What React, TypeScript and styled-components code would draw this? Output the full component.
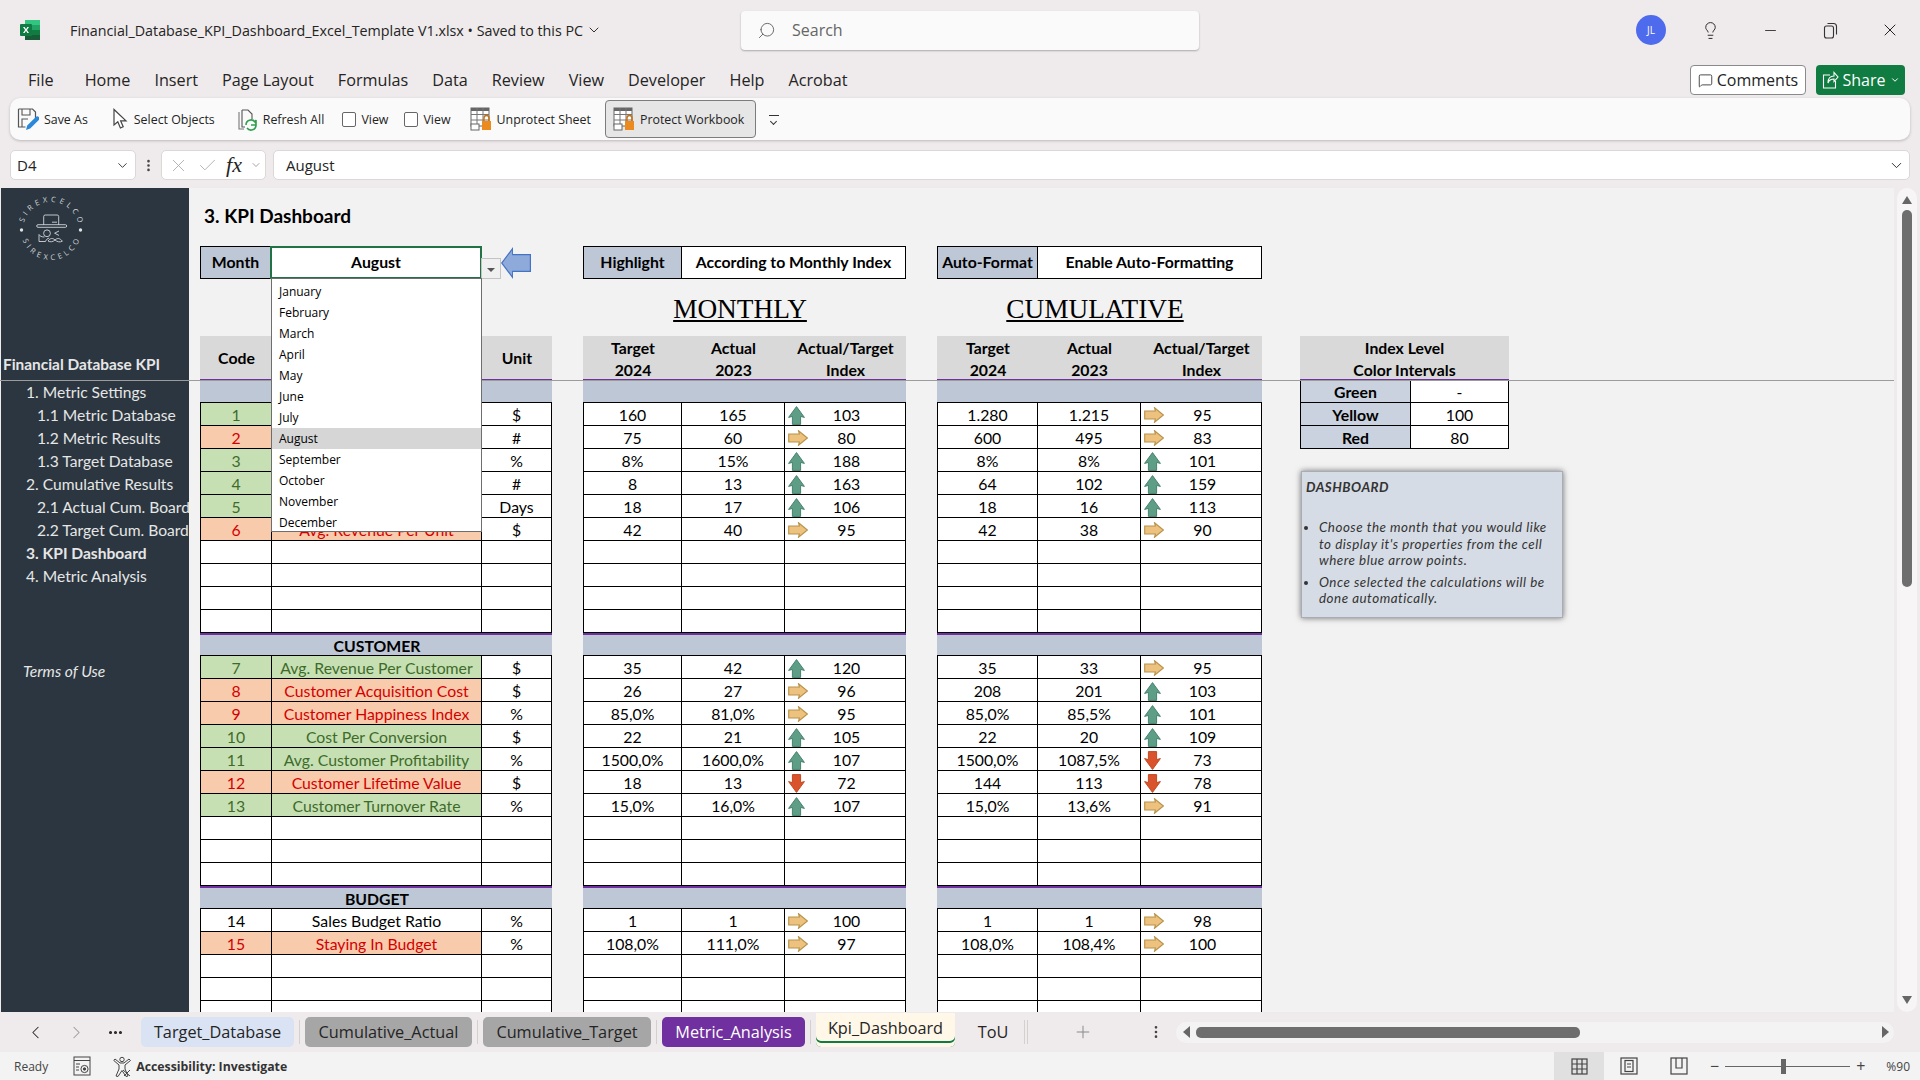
import React from "react";
import styled, { createGlobalStyle } from "styled-components";
import {
  Search,
  ChevronDown,
  Lightbulb,
  Minus,
  X,
  Check,
  MessageSquare,
  MoreVertical,
  ChevronLeft,
  ChevronRight,
  MoreHorizontal,
  Plus,
} from "lucide-react";

const GlobalStyle = createGlobalStyle`
  html, body {
    margin: 0;
    height: 100%;
    overflow: hidden;
    background: #efeaeb;
    font-family: "Open Sans", "Noto Sans", sans-serif;
    color: #242424;
  }
  * { box-sizing: border-box; }
`;

const CELL_FONT = `Lato, "Liberation Sans", sans-serif`;

type Tone = "green" | "red" | "none";
type Dir = "up" | "right" | "down";
type Row = {
  code: string;
  name: string;
  unit: string;
  tone: Tone;
  m: [string, string, Dir, string];
  c: [string, string, Dir, string];
};

const revenueRows: Row[] = [
  { code: "1", name: "", unit: "$", tone: "green", m: ["160", "165", "up", "103"], c: ["1.280", "1.215", "right", "95"] },
  { code: "2", name: "", unit: "#", tone: "red", m: ["75", "60", "right", "80"], c: ["600", "495", "right", "83"] },
  { code: "3", name: "", unit: "%", tone: "green", m: ["8%", "15%", "up", "188"], c: ["8%", "8%", "up", "101"] },
  { code: "4", name: "", unit: "#", tone: "green", m: ["8", "13", "up", "163"], c: ["64", "102", "up", "159"] },
  { code: "5", name: "", unit: "Days", tone: "green", m: ["18", "17", "up", "106"], c: ["18", "16", "up", "113"] },
  { code: "6", name: "Avg. Revenue Per Unit", unit: "$", tone: "red", m: ["42", "40", "right", "95"], c: ["42", "38", "right", "90"] },
];

const customerRows: Row[] = [
  { code: "7", name: "Avg. Revenue Per Customer", unit: "$", tone: "green", m: ["35", "42", "up", "120"], c: ["35", "33", "right", "95"] },
  { code: "8", name: "Customer Acquisition Cost", unit: "$", tone: "red", m: ["26", "27", "right", "96"], c: ["208", "201", "up", "103"] },
  { code: "9", name: "Customer Happiness Index", unit: "%", tone: "red", m: ["85,0%", "81,0%", "right", "95"], c: ["85,0%", "85,5%", "up", "101"] },
  { code: "10", name: "Cost Per Conversion", unit: "$", tone: "green", m: ["22", "21", "up", "105"], c: ["22", "20", "up", "109"] },
  { code: "11", name: "Avg. Customer Profitability", unit: "%", tone: "green", m: ["1500,0%", "1600,0%", "up", "107"], c: ["1500,0%", "1087,5%", "down", "73"] },
  { code: "12", name: "Customer Lifetime Value", unit: "$", tone: "red", m: ["18", "13", "down", "72"], c: ["144", "113", "down", "78"] },
  { code: "13", name: "Customer Turnover Rate", unit: "%", tone: "green", m: ["15,0%", "16,0%", "up", "107"], c: ["15,0%", "13,6%", "right", "91"] },
];

const budgetRows: Row[] = [
  { code: "14", name: "Sales Budget Ratio", unit: "%", tone: "none", m: ["1", "1", "right", "100"], c: ["1", "1", "right", "98"] },
  { code: "15", name: "Staying In Budget", unit: "%", tone: "red", m: ["108,0%", "111,0%", "right", "97"], c: ["108,0%", "108,4%", "right", "100"] },
];

const sections = [
  { title: "", rows: revenueRows, blanks: 4 },
  { title: "CUSTOMER", rows: customerRows, blanks: 3 },
  { title: "BUDGET", rows: budgetRows, blanks: 3 },
];

const months = ["January", "February", "March", "April", "May", "June", "July", "August", "September", "October", "November", "December"];
const menus = ["Home", "Insert", "Page Layout", "Formulas", "Data", "Review", "View", "Developer", "Help", "Acrobat"];
const sideItems: [string, number, boolean][] = [
  ["1. Metric Settings", 1, false],
  ["1.1 Metric Database", 2, false],
  ["1.2 Metric Results", 2, false],
  ["1.3 Target Database", 2, false],
  ["2. Cumulative Results", 1, false],
  ["2.1 Actual Cum. Board", 2, false],
  ["2.2 Target Cum. Board", 2, false],
  ["3. KPI Dashboard", 1, true],
  ["4. Metric Analysis", 1, false],
];

const LEFT_COLS = "71px 210px 70px";
const MONTH_COLS = "98px 103px 121px";
const CUM_COLS = "100px 103px 121px";

export default function App() {
  return (
    <Shell>
      <GlobalStyle />
      <TitleBar>
        <TitleLeft>
          <ExcelLogo />
          <FileName>Financial_Database_KPI_Dashboard_Excel_Template V1.xlsx • Saved to this PC</FileName>
          <ChevronDown size={16} strokeWidth={1.4} />
        </TitleLeft>
        <SearchBox>
          <Search size={19} strokeWidth={1.2} style={{ transform: "scaleX(-1)" }} />
          <span>Search</span>
        </SearchBox>
        <TitleRight>
          <Avatar>JL</Avatar>
          <WinButton><Lightbulb size={19} strokeWidth={1.2} /></WinButton>
          <WinButton><Minus size={17} strokeWidth={1.2} /></WinButton>
          <WinButton><RestoreIcon /></WinButton>
          <WinButton><X size={20} strokeWidth={1.2} /></WinButton>
        </TitleRight>
      </TitleBar>

      <MenuBar>
        <MenuItem $first>File</MenuItem>
        {menus.map((m) => <MenuItem key={m}>{m}</MenuItem>)}
        <MenuActions>
          <CommentsButton><MessageSquare size={15} strokeWidth={1.3} />Comments</CommentsButton>
          <ShareButton><ShareIcon />Share<ChevronDown size={10} strokeWidth={2.4} /></ShareButton>
        </MenuActions>
      </MenuBar>

      <QuickBar>
        <QuickItem $m={23}><SaveAsIcon />Save As</QuickItem>
        <QuickItem $m={23}><PointerIcon />Select Objects</QuickItem>
        <QuickItem $m={18}><RefreshIcon />Refresh All</QuickItem>
        <QuickItem $m={16}><Tick />View</QuickItem>
        <QuickItem $m={19}><Tick />View</QuickItem>
        <QuickItem $m={14}><LockGridIcon />Unprotect Sheet</QuickItem>
        <QuickItem $m={13} $active><LockGridIcon />Protect Workbook</QuickItem>
        <QuickMore />
      </QuickBar>

      <FormulaBar>
        <NameBox>D4<ChevronDown size={15} strokeWidth={1.4} /></NameBox>
        <MoreVertical size={15} strokeWidth={2.2} color="#444" />
        <FxBox>
          <X size={21} strokeWidth={1} color="#aaa" />
          <Check size={21} strokeWidth={1} color="#aaa" />
          <FxText>fx</FxText>
          <ChevronDown size={12} strokeWidth={1.2} color="#666" />
        </FxBox>
        <FormulaInput>
          August
          <ChevronDown size={17} strokeWidth={1.3} />
        </FormulaInput>
      </FormulaBar>

      <Workspace>
        <FreezeLine />
        <Sidebar>
          <LogoArea><SheetLogo /></LogoArea>
          <SideTitle>Financial Database KPI</SideTitle>
          {sideItems.map(([label, level, bold]) => (
            <SideLink key={label} $level={level} $bold={bold}>{label}</SideLink>
          ))}
          <SideTerms>Terms of Use</SideTerms>
        </Sidebar>

        <Sheet>
          <SheetTitle>3. KPI Dashboard</SheetTitle>
          <Columns>
            <LeftColumn>
              <ControlRow $cols="70px 210px">
                <ControlLabel>Month</ControlLabel>
                <MonthCell>
                  August
                  <DropButton><i /></DropButton>
                  <BlueArrow />
                  <DropList>
                    {months.map((m) => <DropItem key={m} $on={m === "August"}>{m}</DropItem>)}
                  </DropList>
                </MonthCell>
              </ControlRow>
              <Heading />
              <HeaderRow $cols={LEFT_COLS}>
                <span>Code</span>
                <span />
                <span>Unit</span>
              </HeaderRow>
              {sections.map((s, i) => (
                <React.Fragment key={i}>
                  <BandRow $cols={LEFT_COLS} $rule={i > 0}><span /><span>{s.title}</span><span /></BandRow>
                  {s.rows.map((r) => (
                    <DataRow key={r.code} $cols={LEFT_COLS}>
                      <Cell $tone={r.tone}>{r.code}</Cell>
                      <Cell $tone={r.tone}>{r.name}</Cell>
                      <Cell>{r.unit}</Cell>
                    </DataRow>
                  ))}
                  {Array.from({ length: s.blanks }).map((_, n) => (
                    <DataRow key={n} $cols={LEFT_COLS}><Cell /><Cell /><Cell /></DataRow>
                  ))}
                </React.Fragment>
              ))}
            </LeftColumn>

            <MetricColumn
              width={323}
              cols={MONTH_COLS}
              controlCols="98px 223px"
              label="Highlight"
              value="According to Monthly Index"
              heading="MONTHLY"
              pick={(r) => r.m}
            />
            <MetricColumn
              width={325}
              cols={CUM_COLS}
              controlCols="100px 223px"
              label="Auto-Format"
              value="Enable Auto-Formatting"
              heading="CUMULATIVE"
              pick={(r) => r.c}
            />

            <RightColumn>
              <Heading />
              <IntervalHead>Index Level<br />Color Intervals</IntervalHead>
              {[["Green", "-"], ["Yellow", "100"], ["Red", "80"]].map(([k, v]) => (
                <DataRow key={k} $cols="110px 98px">
                  <IntervalKey>{k}</IntervalKey>
                  <Cell>{v}</Cell>
                </DataRow>
              ))}
              <NoteBox>
                <NoteTitle>DASHBOARD</NoteTitle>
                <NoteList>
                  <li>Choose the month that you would like to display it's properties from the cell where blue arrow points.</li>
                  <li>Once selected the calculations will be done automatically.</li>
                </NoteList>
              </NoteBox>
            </RightColumn>
          </Columns>
        </Sheet>

        <VScroll>
          <ScrollTriangle $dir="up" />
          <VThumb />
          <ScrollTriangle $dir="down" />
        </VScroll>
      </Workspace>

      <TabBar>
        <TabNav>
          <ChevronLeft size={21} strokeWidth={1.2} />
          <ChevronRight size={21} strokeWidth={1.2} color="#9a9a9a" />
          <MoreHorizontal size={17} strokeWidth={2.4} />
        </TabNav>
        <SheetTab $w={153} $bg="#dae3f3">Target_Database</SheetTab>
        <SheetTab $w={167} $bg="#a6a6a6">Cumulative_Actual</SheetTab>
        <SheetTab $w={168} $bg="#a6a6a6">Cumulative_Target</SheetTab>
        <SheetTab $w={143} $bg="#7030a0" $fg="#fff">Metric_Analysis</SheetTab>
        <ActiveTab>Kpi_Dashboard</ActiveTab>
        <SheetTab $w={58} $bg="transparent">ToU</SheetTab>
        <TabDivider />
        <AddSheet><Plus size={20} strokeWidth={1.2} /></AddSheet>
        <MoreVertical size={16} strokeWidth={2} color="#444" />
        <HScroll>
          <ScrollTriangle $dir="left" />
          <HThumb />
          <ScrollTriangle $dir="right" />
        </HScroll>
      </TabBar>

      <StatusBar>
        <StatusText>Ready</StatusText>
        <MacroIcon />
        <AccessIcon />
        <StatusBold>Accessibility: Investigate</StatusBold>
        <StatusRight>
          <ViewButton $on><NormalViewIcon /></ViewButton>
          <ViewButton><PageViewIcon /></ViewButton>
          <ViewButton><BreakViewIcon /></ViewButton>
          <ZoomSign>−</ZoomSign>
          <ZoomTrack><ZoomThumb /></ZoomTrack>
          <ZoomSign>+</ZoomSign>
          <ZoomValue>%90</ZoomValue>
        </StatusRight>
      </StatusBar>
    </Shell>
  );
}

function MetricColumn(props: {
  width: number;
  cols: string;
  controlCols: string;
  label: string;
  value: string;
  heading: string;
  pick: (r: Row) => [string, string, Dir, string];
}) {
  const { width, cols, controlCols, label, value, heading, pick } = props;
  return (
    <Column $w={width}>
      <ControlRow $cols={controlCols}>
        <ControlLabel>{label}</ControlLabel>
        <ControlValue>{value}</ControlValue>
      </ControlRow>
      <Heading><u>{heading}</u></Heading>
      <HeaderRow $cols={cols}>
        <span>Target<br />2024</span>
        <span>Actual<br />2023</span>
        <span>Actual/Target<br />Index</span>
      </HeaderRow>
      {sections.map((s, i) => (
        <React.Fragment key={i}>
          <BandRow $cols={cols} $rule={i > 0} />
          {s.rows.map((r) => {
            const [a, b, dir, idx] = pick(r);
            return (
              <DataRow key={r.code} $cols={cols}>
                <Cell>{a}</Cell>
                <Cell>{b}</Cell>
                <IndexCell><TrendArrow dir={dir} /><span>{idx}</span></IndexCell>
              </DataRow>
            );
          })}
          {Array.from({ length: s.blanks }).map((_, n) => (
            <DataRow key={n} $cols={cols}><Cell /><Cell /><Cell /></DataRow>
          ))}
        </React.Fragment>
      ))}
    </Column>
  );
}

function TrendArrow({ dir }: { dir: Dir }) {
  if (dir === "right") {
    return (
      <svg width="20" height="16" viewBox="0 0 20 16">
        <path d="M10.5.7 19.4 8l-8.9 7.3.9-3.3H.7V4h10.7z" fill="#ecc27e" stroke="#b8924a" strokeWidth="1.1" />
      </svg>
    );
  }
  const fill = dir === "up" ? "#5f9e86" : "#d9542c";
  const edge = dir === "up" ? "#47826e" : "#c24a24";
  return (
    <svg width="17" height="19" viewBox="0 0 17 19" style={{ transform: dir === "down" ? "scaleY(-1)" : undefined }}>
      <path d="M8.5.6 16.4 11.4 12.6 10.4v8H4.4v-8l-3.8 1z" fill={fill} stroke={edge} strokeWidth="1" />
    </svg>
  );
}

function ExcelLogo() {
  return (
    <svg width="22" height="22" viewBox="0 0 22 22" style={{ marginRight: 28 }}>
      <rect x="6" y="1" width="15" height="20" rx="1.5" fill="#21a366" />
      <rect x="6" y="1" width="15" height="5" fill="#33c481" />
      <rect x="6" y="11" width="15" height="5" fill="#107c41" />
      <rect x="6" y="16" width="15" height="5" fill="#185c37" />
      <rect x="1" y="5" width="12" height="12" rx="1" fill="#0f7b42" />
      <path d="M4 8h1.7L7 10.2 8.3 8H10l-2.1 3L10 14H8.3L7 11.8 5.7 14H4l2.1-3z" fill="#fff" />
    </svg>
  );
}

function RestoreIcon() {
  return (
    <svg width="15" height="17" viewBox="0 0 15 17" fill="none" stroke="#333" strokeWidth="1.1">
      <rect x="1.5" y="4" width="9" height="12" rx="2" />
      <path d="M4.5 1.5h6a3 3 0 0 1 3 3v8" />
    </svg>
  );
}

function ShareIcon() {
  return (
    <svg width="17" height="20" viewBox="0 0 17 20" fill="none" stroke="#fff" strokeWidth="1.1">
      <path d="M8 5H1.5v13h12v-7" />
      <path d="M6 13c0-5 3-7 6-7V2.5L16 7l-4 4.5V9c-3 0-5 1-6 4z" />
    </svg>
  );
}

function SaveAsIcon() {
  return (
    <svg width="22" height="24" viewBox="0 0 22 24" fill="none">
      <path d="M1.5 2h14l3 3v6M1.5 2v18h7" stroke="#555" strokeWidth="1.2" />
      <path d="M5 2v6h8V2M5 20v-8h6" stroke="#555" strokeWidth="1.1" />
      <path d="M9 23l1.2-4.4 8.6-8.6a2 2 0 0 1 3 3l-8.6 8.6z" fill="#2b88d8" />
    </svg>
  );
}

function PointerIcon() {
  return (
    <svg width="18" height="22" viewBox="0 0 18 22" fill="#fff" stroke="#444" strokeWidth="1.2">
      <path d="M3 1.5v15.5l3.8-3.2 2.6 6.2 2.8-1.2-2.6-6H15z" />
    </svg>
  );
}

function RefreshIcon() {
  return (
    <svg width="20" height="24" viewBox="0 0 20 24" fill="none">
      <path d="M4 3h6l4 4v5M4 3v17h3" stroke="#555" strokeWidth="1.1" />
      <path d="M1 5v17h5" stroke="#777" strokeWidth="1.1" />
      <path d="M8 18a5 5 0 0 1 9-3l1-2v5h-5M18 18a5 5 0 0 1-9 3" stroke="#2e9e4f" strokeWidth="1.6" />
    </svg>
  );
}

function LockGridIcon() {
  return (
    <svg width="22" height="24" viewBox="0 0 22 24" fill="none">
      <rect x="1" y="1" width="18" height="18" fill="#fff" stroke="#666" />
      <rect x="1" y="1" width="18" height="3" fill="#666" />
      <path d="M7 1v18M13 1v18M1 7.5h18M1 13h18" stroke="#777" />
      <rect x="1" y="17" width="8" height="6" fill="#fff" stroke="#666" />
      <rect x="12" y="14" width="9" height="9" fill="#ea8a1f" />
      <path d="M14 14v-3a2.5 2.5 0 0 1 5 0v3" stroke="#c96f10" strokeWidth="1.4" />
    </svg>
  );
}

function SheetLogo() {
  return (
    <svg width="72" height="72" viewBox="0 0 72 72" fill="none" stroke="#d3d6d9" strokeWidth="0.9">
      <defs>
        <path id="logoTop" d="M8.95 28.75A28 28 0 0 1 63.05 28.75" />
        <path id="logoBottom" d="M7.8 46.3A30 30 0 0 0 64.2 46.3" />
      </defs>
      <LogoText><textPath href="#logoTop">SIREXCELCO</textPath></LogoText>
      <LogoText><textPath href="#logoBottom">SIREXCELCO</textPath></LogoText>
      <circle cx="6.5" cy="36" r="1.7" fill="#dfe1e3" stroke="none" />
      <circle cx="65.5" cy="36" r="1.7" fill="#dfe1e3" stroke="none" />
      <path d="M28.7 31V22.5A1.5 1.5 0 0 1 30.2 21h12a1.5 1.5 0 0 1 1.5 1.5V31" />
      <rect x="21.7" y="30.7" width="30" height="2.6" rx="1.3" />
      <path d="M37 28.2h5" />
      <circle cx="32" cy="39.3" r="3.4" />
      <path d="M44 37l-4.4 2.2L44 41.4" />
      <path d="M29.4 43c-3 0-4.6-1-5.4-2.5v7h6.5c.8-2 2-3.3 3.6-3.3" />
      <path d="M33 47c2.2-2.8 4.6-3.4 7-1 2.4-2.4 5-1.8 7.4 1.2-2.8 1.4-5.2.6-7.4-1.2-2 1.8-4.6 2.4-7 1z" />
    </svg>
  );
}

function MacroIcon() {
  return (
    <svg width="18" height="20" viewBox="0 0 18 20" fill="none" stroke="#444" strokeWidth="1">
      <rect x="1" y="1" width="16" height="18" />
      <path d="M1 4.5h16M3 8h4M3 11h3M3 14h3" />
      <circle cx="11.5" cy="13" r="3.6" />
      <circle cx="11.5" cy="13" r="1.2" fill="#444" />
    </svg>
  );
}

function AccessIcon() {
  return (
    <svg width="19" height="21" viewBox="0 0 19 21" fill="none" stroke="#444" strokeWidth="1" style={{ marginLeft: 22 }}>
      <circle cx="9" cy="3.5" r="2.2" />
      <path d="M2 3l5 4h4l5-4 1.5 1.5L12 9v4l3 7-2 .5-4-6-4 6-2-.5 3-7V9L.8 4.5z" />
      <path d="M10 14l7 6M17 14l-6 6" />
    </svg>
  );
}

function NormalViewIcon() {
  return (
    <svg width="17" height="17" viewBox="0 0 17 17" fill="none" stroke="#444" strokeWidth="1.2">
      <rect x="1" y="1" width="15" height="15" />
      <path d="M6 1v15M11 1v15M1 6h15M1 11h15" />
    </svg>
  );
}

function PageViewIcon() {
  return (
    <svg width="18" height="18" viewBox="0 0 18 18" fill="none" stroke="#444" strokeWidth="1.2">
      <rect x="1" y="1" width="16" height="16" />
      <rect x="5" y="3.5" width="8" height="11" />
      <path d="M7 7h4M7 10h4" />
    </svg>
  );
}

function BreakViewIcon() {
  return (
    <svg width="18" height="18" viewBox="0 0 18 18" fill="none" stroke="#444" strokeWidth="1.2">
      <rect x="1" y="1" width="16" height="16" />
      <path d="M6 1v10h6V1" />
    </svg>
  );
}

const Shell = styled.div`
  display: flex;
  flex-direction: column;
  width: 1920px;
  height: 1080px;
  overflow: hidden;
`;

const TitleBar = styled.header`
  display: grid;
  grid-template-columns: 741px 458px 1fr;
  height: 60px;
  align-items: center;
`;

const TitleLeft = styled.div`
  display: flex;
  align-items: center;
  padding-left: 19px;
  gap: 3px;
`;

const FileName = styled.span`
  margin-left: -2px;
  font-size: 14.3px;
  white-space: nowrap;
`;

const SearchBox = styled.div`
  display: flex;
  align-items: center;
  gap: 16px;
  height: 39px;
  padding-left: 16px;
  background: #fafafa;
  border-radius: 4px;
  box-shadow: 0 1px 2px rgba(0, 0, 0, 0.28);
  font-size: 16px;
  color: #666;
`;

const TitleRight = styled.div`
  display: flex;
  align-items: center;
  justify-content: flex-end;
  padding-right: 0;
`;

const Avatar = styled.div`
  display: flex;
  align-items: center;
  justify-content: center;
  width: 30px;
  height: 30px;
  margin-right: 14px;
  border-radius: 50%;
  background: #4f6bed;
  color: #fff;
  font-size: 10px;
`;

const WinButton = styled.div`
  display: flex;
  align-items: center;
  justify-content: center;
  width: 60px;
`;

const MenuBar = styled.nav`
  display: flex;
  align-items: center;
  height: 38px;
  padding: 2px 15px 0 28px;
`;

const MenuItem = styled.span<{ $first?: boolean }>`
  margin-right: ${(p) => (p.$first ? "31px" : "24px")};
  font-size: 16.2px;
  white-space: nowrap;
`;

const MenuActions = styled.div`
  display: flex;
  gap: 10px;
  margin-left: auto;
`;

const CommentsButton = styled.div`
  display: flex;
  align-items: center;
  justify-content: center;
  gap: 4px;
  width: 116px;
  height: 30px;
  background: #fff;
  border: 1px solid #8a8a8a;
  border-radius: 4px;
  font-size: 16px;
`;

const ShareButton = styled.div`
  display: flex;
  align-items: center;
  justify-content: center;
  gap: 4px;
  width: 89px;
  height: 30px;
  background: #107c41;
  border-radius: 4px;
  color: #fff;
  font-size: 16px;
`;

const QuickBar = styled.div`
  display: flex;
  align-items: center;
  height: 42px;
  margin: 0 10px;
  padding-left: 7px;
  background: #fafafa;
  border-radius: 10px;
  box-shadow: 0 1px 3px rgba(0, 0, 0, 0.22);
`;

const QuickItem = styled.div<{ $active?: boolean; $m: number }>`
  display: flex;
  align-items: center;
  gap: 5px;
  height: 38px;
  padding: 0 ${(p) => (p.$active ? "11px" : "0")} 0 ${(p) => (p.$active ? "7px" : "0")};
  margin-right: ${(p) => p.$m}px;
  border: ${(p) => (p.$active ? "1px solid #7c7c7c" : "0")};
  border-radius: 4px;
  background: ${(p) => (p.$active ? "#e6e6e6" : "transparent")};
  font-size: 12.4px;
  white-space: nowrap;
`;

const Tick = styled.i`
  width: 14px;
  height: 15px;
  background: #fff;
  border: 1px solid #666;
  border-radius: 2px;
`;

const QuickMore = styled.i`
  position: relative;
  width: 10px;
  height: 8px;
  border-top: 1px solid #333;
  &::after {
    content: "";
    position: absolute;
    left: 2px;
    top: 3px;
    width: 4px;
    height: 4px;
    border-right: 1px solid #333;
    border-bottom: 1px solid #333;
    transform: rotate(45deg);
  }
`;

const FormulaBar = styled.div`
  display: flex;
  align-items: center;
  height: 30px;
  margin: 10px 10px 0;
`;

const barBox = `
  display: flex;
  align-items: center;
  height: 30px;
  background: #fff;
  border: 1px solid #dcd8d8;
  border-radius: 5px;
`;

const NameBox = styled.div`
  ${barBox}
  justify-content: space-between;
  width: 126px;
  margin-right: 5px;
  padding: 0 5px 0 6px;
  font-size: 15px;
`;

const FxBox = styled.div`
  ${barBox}
  justify-content: space-between;
  width: 105px;
  margin: 0 7px 0 5px;
  padding: 0 3px 0 6px;
`;

const FxText = styled.span`
  font-family: "Liberation Serif", serif;
  font-style: italic;
  font-size: 22px;
`;

const FormulaInput = styled.div`
  ${barBox}
  flex: 1;
  justify-content: space-between;
  padding: 0 4px 0 12px;
  font-size: 15px;
`;

const Workspace = styled.main`
  position: relative;
  display: flex;
  height: 824px;
  margin-top: 8px;
  padding-left: 1px;
`;

const FreezeLine = styled.div`
  position: absolute;
  z-index: 3;
  left: 0;
  right: 26px;
  top: 192px;
  height: 1px;
  background: #9c9c9c;
`;

const Sidebar = styled.aside`
  flex: none;
  width: 188px;
  overflow: hidden;
  background: #2b3640;
  color: #e6e6e6;
  font-family: ${CELL_FONT};
`;

const LogoArea = styled.div`
  height: 166px;
  padding: 6px 0 0 14px;
`;

const LogoText = styled.text`
  fill: #d3d6d9;
  stroke: none;
  font-family: "Open Sans", sans-serif;
  font-size: 7.5px;
  letter-spacing: 3.4px;
`;

const SideTitle = styled.div`
  height: 26px;
  padding-left: 2px;
  font-size: 15.4px;
  line-height: 20px;
  font-weight: 700;
  white-space: nowrap;
`;

const SideLink = styled.div<{ $level: number; $bold: boolean }>`
  height: 23px;
  padding-left: ${(p) => (p.$level === 1 ? "25px" : "36px")};
  font-size: 15.6px;
  line-height: 25px;
  font-weight: ${(p) => (p.$bold ? 700 : 400)};
  white-space: nowrap;
`;

const SideTerms = styled.div`
  margin-top: 73px;
  padding-left: 22px;
  font-size: 15.6px;
  line-height: 23px;
  font-style: italic;
`;

const Sheet = styled.section`
  flex: 1;
  min-width: 0;
  height: 100%;
  overflow: hidden;
  padding-left: 11px;
  background: #f2f2f2;
  color: #000;
  font-family: ${CELL_FONT};
  font-size: 15.8px;
`;

const SheetTitle = styled.h1`
  height: 58px;
  margin: 0;
  padding: 14px 0 0 4px;
  font-size: 19px;
  line-height: 28px;
  font-weight: 700;
`;

const Columns = styled.div`
  display: flex;
  align-items: flex-start;
`;

const Column = styled.div<{ $w: number }>`
  flex: none;
  width: ${(p) => p.$w}px;
  margin-right: 31px;
`;

const LeftColumn = styled(Column).attrs({ $w: 352 })``;

const RightColumn = styled(Column).attrs({ $w: 209 })`
  margin-left: 7px;
  padding-top: 33px;
`;

const ControlRow = styled.div<{ $cols: string }>`
  display: grid;
  grid-template-columns: ${(p) => p.$cols};
  height: 33px;
  border: 1px solid #000;
  width: max-content;
  font-weight: 700;
  line-height: 30px;
  text-align: center;
`;

const ControlLabel = styled.div`
  background: #bdc7d6;
  border-right: 1px solid #000;
  white-space: nowrap;
`;

const ControlValue = styled.div`
  background: #fff;
  white-space: nowrap;
`;

const MonthCell = styled.div`
  position: relative;
  background: #fff;
  outline: 2px solid #217346;
  outline-offset: -1px;
  z-index: 4;
`;

const DropButton = styled.div`
  position: absolute;
  left: 100%;
  top: 11px;
  width: 20px;
  height: 21px;
  background: #f0f0f0;
  border: 1px solid #c4c4c4;
  i {
    position: absolute;
    left: 5px;
    top: 9px;
    border: 4px solid transparent;
    border-top: 4px solid #555;
  }
`;

const BlueArrow = styled.i`
  position: absolute;
  left: 230px;
  top: 0;
  width: 30px;
  height: 32px;
  &::before {
    content: "";
    position: absolute;
    inset: 0;
    background: #4472c4;
    clip-path: polygon(0 50%, 40% 0, 40% 22%, 100% 22%, 100% 78%, 40% 78%, 40% 100%);
  }
  &::after {
    content: "";
    position: absolute;
    inset: 0;
    background: #8eaadb;
    clip-path: polygon(5% 50%, 37% 10%, 37% 26%, 96% 26%, 96% 74%, 37% 74%, 37% 90%);
  }
`;

const DropList = styled.ul`
  position: absolute;
  left: 0;
  top: 100%;
  width: 211px;
  height: 254px;
  margin: 0;
  padding: 2px 0 0;
  list-style: none;
  background: #fff;
  border: 1px solid #6e6e6e;
  font-family: "Open Sans", sans-serif;
  font-size: 12px;
  font-weight: 400;
  text-align: left;
`;

const DropItem = styled.li<{ $on: boolean }>`
  height: 21px;
  padding-left: 7px;
  line-height: 21px;
  background: ${(p) => (p.$on ? "#d6d6d6" : "transparent")};
`;

const Heading = styled.div`
  height: 57px;
  padding-top: 15px;
  font-family: "Liberation Serif", serif;
  font-size: 27.3px;
  line-height: 30px;
  text-align: center;
  margin-left: -9px;
`;

const HeaderRow = styled.div<{ $cols: string }>`
  display: grid;
  grid-template-columns: ${(p) => `1px ${p.$cols}`};
  height: 44px;
  padding-top: 1px;
  align-items: center;
  background: #d9d9d9;
  border-bottom: 1px solid #7030a0;
  font-weight: 700;
  line-height: 22px;
  text-align: center;
  &::before { content: ""; }
`;

const BandRow = styled.div<{ $cols: string; $rule: boolean }>`
  display: grid;
  grid-template-columns: ${(p) => `1px ${p.$cols}`};
  height: 23px;
  background: #bdc7d6;
  border-top: ${(p) => (p.$rule ? "2px solid #7030a0" : "0")};
  border-bottom: 1px solid #000;
  font-weight: 700;
  line-height: 21px;
  text-align: center;
  &::before { content: ""; }
`;

const DataRow = styled.div<{ $cols: string }>`
  display: grid;
  grid-template-columns: ${(p) => p.$cols};
  height: 23px;
  border-left: 1px solid #000;
  border-bottom: 1px solid #000;
  width: max-content;
  min-width: 100%;
`;

const toneStyles = {
  green: "background: #c6e0b4; color: #3f6b2a;",
  red: "background: #f8cbad; color: #d40000;",
  none: "background: #fff; color: #000;",
};

const Cell = styled.div<{ $tone?: Tone }>`
  height: 22px;
  border-right: 1px solid #000;
  line-height: 24px;
  text-align: center;
  white-space: nowrap;
  overflow: hidden;
  ${(p) => toneStyles[p.$tone || "none"]}
`;

const IndexCell = styled.div`
  display: grid;
  grid-template-columns: 1fr auto 1fr;
  align-items: center;
  height: 22px;
  padding-left: 3px;
  border-right: 1px solid #000;
  background: #fff;
  line-height: 24px;
  svg { justify-self: start; }
`;

const IntervalHead = styled.div`
  height: 44px;
  padding-top: 1px;
  background: #d9d9d9;
  border-bottom: 1px solid #7030a0;
  font-weight: 700;
  line-height: 22px;
  text-align: center;
`;

const IntervalKey = styled.div`
  height: 22px;
  background: #c9d2de;
  border-right: 1px solid #000;
  font-weight: 700;
  line-height: 24px;
  text-align: center;
`;

const NoteBox = styled.div`
  width: 262px;
  height: 147px;
  margin: 22px 0 0 1px;
  padding: 7px 7px 7px 4px;
  background: #d6dce5;
  border: 1px solid #a9adb3;
  box-shadow: 0 0 6px rgba(0, 0, 0, 0.55);
  font-family: ${CELL_FONT};
  font-size: 13.4px;
  font-style: italic;
  letter-spacing: 0.5px;
  line-height: 16.7px;
  color: #333;
`;

const NoteTitle = styled.div`
  height: 40px;
  font-weight: 700;
`;

const NoteList = styled.ul`
  margin: 0;
  padding-left: 13px;
  li { margin-bottom: 4.5px; }
`;

const VScroll = styled.div`
  display: flex;
  flex-direction: column;
  align-items: center;
  flex: none;
  width: 20px;
  margin: 0 3px 0 3px;
  padding: 8px 0;
  background: #f7f5f5;
  border-radius: 10px;
`;

const VThumb = styled.div`
  width: 10px;
  height: 377px;
  margin: 6px 0 auto;
  background: #6e6e6e;
  border-radius: 5px;
`;

const triangles = {
  up: "border-width: 0 5px 8px; border-color: transparent transparent #666;",
  down: "border-width: 8px 5px 0; border-color: #666 transparent transparent;",
  left: "border-width: 6px 7px 6px 0; border-color: transparent #666 transparent transparent;",
  right: "border-width: 6px 0 6px 7px; border-color: transparent transparent transparent #666;",
};

const ScrollTriangle = styled.i<{ $dir: keyof typeof triangles }>`
  width: 0;
  height: 0;
  border-style: solid;
  ${(p) => triangles[p.$dir]}
`;

const TabBar = styled.div`
  display: flex;
  align-items: center;
  height: 40px;
  padding-left: 0;
`;

const TabNav = styled.div`
  display: flex;
  align-items: center;
  gap: 20px;
  width: 141px;
  padding-left: 25px;
`;

const SheetTab = styled.div<{ $w: number; $bg: string; $fg?: string }>`
  position: relative;
  flex: none;
  width: ${(p) => p.$w}px;
  height: 30px;
  margin-right: 11px;
  background: ${(p) => p.$bg};
  border-radius: 5px;
  color: ${(p) => p.$fg || "#242424"};
  font-size: 16.3px;
  line-height: 30px;
  text-align: center;
  white-space: nowrap;
  &::after {
    content: "";
    position: absolute;
    right: -6px;
    top: 3px;
    width: 1px;
    height: 24px;
    background: #d4d0d0;
  }
`;

const ActiveTab = styled.div`
  flex: none;
  width: 139px;
  height: 34px;
  margin: -4px 9px 0 0;
  background: #fff8e8;
  border-radius: 0 0 5px 5px;
  font-size: 16.3px;
  line-height: 30px;
  text-align: center;
  white-space: nowrap;
  box-shadow: inset 0 -4px 0 #fff8e8, inset 0 -6px 0 #107c41;
`;

const TabDivider = styled.i`
  width: 1px;
  height: 24px;
  margin-left: -9px;
  background: #d4d0d0;
`;

const AddSheet = styled.div`
  width: 116px;
  margin: 0 7px 0 0;
  display: flex;
  justify-content: center;
  color: #8a8a8a;
`;

const HScroll = styled.div`
  display: flex;
  align-items: center;
  gap: 6px;
  width: 718px;
  height: 21px;
  margin-left: 12px;
  padding: 0 5px 0 7px;
  background: #f3f3f3;
  border-radius: 10px;
`;

const HThumb = styled.div`
  width: 384px;
  height: 11px;
  margin-right: auto;
  background: #6e6e6e;
  border-radius: 5px;
`;

const StatusBar = styled.footer`
  display: flex;
  align-items: center;
  height: 28px;
  padding-left: 14px;
  background: #f3f3f3;
  font-size: 12px;
  color: #444;
`;

const StatusText = styled.span`
  margin-right: 25px;
`;

const StatusBold = styled.span`
  margin-left: 4px;
  font-size: 12.3px;
  font-weight: 700;
  color: #333;
`;

const StatusRight = styled.div`
  display: flex;
  align-items: center;
  height: 100%;
  margin-left: auto;
  padding-right: 10px;
`;

const ViewButton = styled.div<{ $on?: boolean }>`
  display: flex;
  align-items: center;
  justify-content: center;
  width: 50px;
  height: 100%;
  background: ${(p) => (p.$on ? "#e0e0e0" : "transparent")};
`;

const ZoomSign = styled.span`
  margin: 0 6px;
  font-size: 16px;
`;

const ZoomTrack = styled.div`
  position: relative;
  width: 125px;
  height: 1px;
  background: #666;
`;

const ZoomThumb = styled.i`
  position: absolute;
  left: 56px;
  top: -7px;
  width: 5px;
  height: 15px;
  background: #666;
`;

const ZoomValue = styled.span`
  margin-left: 15px;
  font-size: 12px;
`;
